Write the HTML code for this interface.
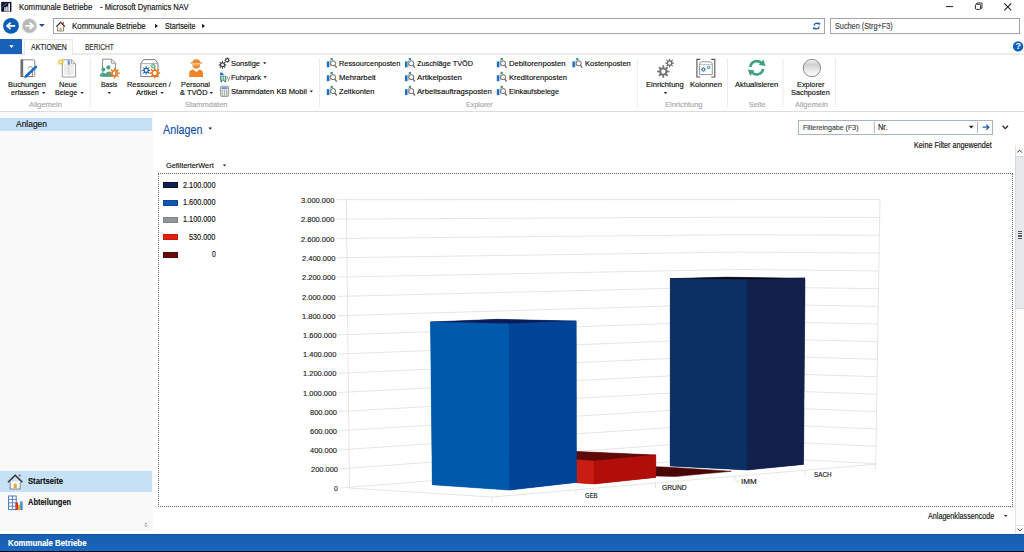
<!DOCTYPE html>
<html lang="de"><head><meta charset="utf-8"><title>Kommunale Betriebe - Microsoft Dynamics NAV</title>
<style>
html,body{margin:0;padding:0;background:#fff;}
body{width:1024px;height:552px;overflow:hidden;font-family:"Liberation Sans",Arial,sans-serif;}
#app{position:relative;width:1024px;height:552px;overflow:hidden;background:#fff;}
#app div,#app svg{position:absolute;}
.t{position:absolute;white-space:nowrap;display:inline-block;transform-origin:0 50%;-webkit-text-stroke:0.15px currentColor;}

</style></head><body>
<div id="app">
<!-- nav pane -->
<div style="left:0;top:111px;width:152.7px;height:419.5px;background:#f9f9f9"></div>
<div style="left:0;top:118.3px;width:151.6px;height:12.4px;background:#c6e1f6"></div>
<div style="left:0;top:470.5px;width:151.6px;height:21.2px;background:#c6e1f6"></div>
<!-- status bar -->
<div style="left:0;top:534.2px;width:1024px;height:17.8px;background:linear-gradient(#0a469a 0,#1760b2 1.4px,#1862b6 60%,#1a6ac6 100%)"></div>
<div style="left:0;top:550.8px;width:1024px;height:2px;background:#050505"></div>
<!-- ribbon borders -->
<div style="left:0;top:53px;width:1024px;height:1.8px;background:#ececec"></div>
<div style="left:0;top:110.5px;width:1024px;height:1px;background:#dcdcdc"></div>
<!-- blue app tab -->
<div style="left:0;top:38.8px;width:21.8px;height:15px;background:#1862ba"></div>
<!-- active tab -->
<div style="left:23.8px;top:39.4px;width:49.6px;height:15.6px;background:#fff;border:1px solid #e8e8e8;border-bottom:none;box-sizing:border-box"></div>
<!-- address + search -->
<div style="left:53px;top:18px;width:772px;height:16px;border:1px solid #a4a4a4;box-sizing:border-box;background:#fff"></div>
<div style="left:830px;top:18px;width:189.5px;height:16px;border:1px solid #a4a4a4;box-sizing:border-box;background:#fff"></div>
<!-- filter box -->
<div style="left:798px;top:119.5px;width:195px;height:15.5px;border:1px solid #a8b4c0;box-sizing:border-box;background:#fff"></div>
<!-- chart frame -->
<div style="left:158px;top:173px;width:855px;height:334px;border:1px dotted #666;box-sizing:border-box"></div>
<!-- scrollbar -->
<div style="left:1014.5px;top:144.5px;width:9.5px;height:389.5px;background:#fcfcfc;border-left:1px solid #e2e2e2;box-sizing:border-box"></div>
<div style="left:1015px;top:156px;width:9px;height:153px;background:#e6e9ec;border:1px solid #d6d9dc;border-right:none;box-sizing:border-box"></div>
<div style="left:1018px;top:230.6px;width:4px;height:1.2px;background:#555"></div>
<div style="left:1018px;top:233px;width:4px;height:1.2px;background:#555"></div>
<div style="left:1018px;top:235.4px;width:4px;height:1.2px;background:#555"></div>
<div style="left:1018px;top:237.8px;width:4px;height:1.2px;background:#555"></div>
<div style="left:1014.5px;top:524.5px;width:9.5px;height:1px;background:#e6e6e6"></div>
<!-- chart -->
<svg style="left:0;top:0" width="1024" height="552" viewBox="0 0 1024 552">
<g fill="none" stroke="#e2e2e2" stroke-width="0.9">
<polyline points="336.4,199.7 738,199.6 880.0,199.5"/>
<polyline points="336.6,219.1 738,217.2 879.7,217.4"/>
<polyline points="336.9,238.5 738,234.7 879.4,235.3"/>
<polyline points="337.1,257.8 738,252.1 879.2,253.1"/>
<polyline points="337.3,277.1 738,269.5 878.9,270.9"/>
<polyline points="337.6,296.4 738,286.8 878.6,288.7"/>
<polyline points="337.8,315.7 738,304.0 878.3,306.4"/>
<polyline points="338.0,334.9 738,321.2 878.0,324.0"/>
<polyline points="338.3,354.1 738,338.4 877.8,341.6"/>
<polyline points="338.5,373.3 738,355.4 877.5,359.2"/>
<polyline points="338.7,392.5 738,372.4 877.2,376.7"/>
<polyline points="339.0,411.6 738,389.3 876.9,394.2"/>
<polyline points="339.2,430.8 738,406.2 876.6,411.6"/>
<polyline points="339.4,449.9 738,423.0 876.4,429.0"/>
<polyline points="339.7,468.9 738,439.7 876.1,446.3"/>
<polyline points="339.9,488.0 738,456.4 875.8,463.6"/>
<line x1="346.3" y1="199.6" x2="349.5" y2="488.3"/>
<polyline points="349.5,488 492,497 875.6,464.2"/>
<line x1="492" y1="497" x2="492" y2="503"/>
<line x1="576" y1="490" x2="576" y2="495"/>
<line x1="655.5" y1="482" x2="655.5" y2="488"/>
<line x1="735" y1="476" x2="735" y2="481"/>
<line x1="805" y1="470" x2="805" y2="475"/>
<line x1="880" y1="199.5" x2="875.6" y2="470"/>
</g>
<!-- dark red flat bar -->
<polygon points="656,466.7 670,467.2 731.3,471.3 675,476.6 656,476" fill="#4a0606" stroke="#4a0606" stroke-width="0.5" stroke-linejoin="round"/>
<!-- red bar -->
<polygon points="576,451.4 655.8,455 655.8,477.4 594,484 576,482.7" fill="#b10e09"/>
<polygon points="576,451.4 655.8,455 594,461 576,459.7" fill="#5e0a08" stroke="#5e0a08" stroke-width="0.5" stroke-linejoin="round"/>
<polygon points="576,459.7 594,461 594,484 576,482.7" fill="#c91d11" stroke="#c91d11" stroke-width="0.5" stroke-linejoin="round"/>
<polygon points="594,461 655.8,455 655.8,477.4 594,484" fill="#b10e09" stroke="#b10e09" stroke-width="0.5" stroke-linejoin="round"/>
<!-- blue bar -->
<polygon points="430.5,322 497,319.3 576.2,321.1 576.4,482.4 509.6,490.1 432.3,484.8" fill="#004498"/>
<polygon points="430.5,322 497,319.3 576.2,321.1 509,323.8" fill="#0b1b5a" stroke="#0b1b5a" stroke-width="0.5" stroke-linejoin="round"/>
<polygon points="430.5,322 509,323.8 509.6,490.1 432.3,484.8" fill="#0059aa" stroke="#0059aa" stroke-width="0.5" stroke-linejoin="round"/>
<polygon points="509,323.8 576.2,321.1 576.4,482.4 509.6,490.1" fill="#004498" stroke="#004498" stroke-width="0.5" stroke-linejoin="round"/>
<!-- navy bar -->
<polygon points="670.3,278.6 726,277.2 805,278.2 803.5,464.4 747.5,470 670.2,466" fill="#13204b"/>
<polygon points="670.3,278.6 726,277.2 805,278.2 747.4,279.6" fill="#05060f" stroke="#05060f" stroke-width="0.5" stroke-linejoin="round"/>
<polygon points="670.3,278.6 747.4,279.6 747.5,470 670.2,466" fill="#0a2f62" stroke="#0a2f62" stroke-width="0.5" stroke-linejoin="round"/>
<polygon points="747.4,279.6 805,278.2 803.5,464.4 747.5,470" fill="#13204b" stroke="#13204b" stroke-width="0.5" stroke-linejoin="round"/>
</svg>
<!-- legend swatches -->
<div style="left:163px;top:182.1px;width:14.6px;height:6.2px;background:#13204f;box-sizing:border-box;border:0.6px solid #0a1234"></div>
<div style="left:163px;top:199.5px;width:14.6px;height:6.2px;background:#1155b0;box-sizing:border-box;border:0.6px solid #0d4a9c"></div>
<div style="left:163px;top:216.9px;width:14.6px;height:6.2px;background:#909599;box-sizing:border-box;border:0.6px solid #7f8488"></div>
<div style="left:163px;top:234.3px;width:14.6px;height:6.2px;background:#e02010;box-sizing:border-box;border:0.6px solid #c81c0e"></div>
<div style="left:163px;top:251.7px;width:14.6px;height:6.2px;background:#6b0a0a;box-sizing:border-box;border:0.6px solid #560606"></div>
<!-- icons -->
<svg style="left:0;top:0" width="1024" height="552" viewBox="0 0 1024 552">
<defs>
<path id="gear" fill-rule="evenodd" d="M0.661 -0.159L1.042 -0.132L1.042 0.132L0.661 0.159L0.580 0.355L0.830 0.644L0.644 0.830L0.355 0.580L0.159 0.661L0.132 1.042L-0.132 1.042L-0.159 0.661L-0.355 0.580L-0.644 0.830L-0.830 0.644L-0.580 0.355L-0.661 0.159L-1.042 0.132L-1.042 -0.132L-0.661 -0.159L-0.580 -0.355L-0.830 -0.644L-0.644 -0.830L-0.355 -0.580L-0.159 -0.661L-0.132 -1.042L0.132 -1.042L0.159 -0.661L0.355 -0.580L0.644 -0.830L0.830 -0.644L0.580 -0.355ZM0.370 0A0.370 0.370 0 1 0 -0.370 0A0.370 0.370 0 1 0 0.370 0Z"/>
<g id="exp"><rect x="-0.2" y="3.4" width="2.5" height="5.9" fill="#1b6fc4"/><rect x="2.6" y="2.2" width="1.4" height="6.4" fill="#8a8a8a" opacity=".55"/><rect x="3.6" y="0" width="2.2" height="2.2" fill="#3a9a78"/><circle cx="6.1" cy="5.3" r="2.5" fill="#fff" stroke="#666" stroke-width="1"/><line x1="7.9" y1="7.3" x2="9.7" y2="9.7" stroke="#666" stroke-width="1.3"/></g>
<linearGradient id="ball" x1="0" y1="0" x2="0" y2="1"><stop offset="0" stop-color="#f4f4f4"/><stop offset="0.3" stop-color="#cfcfcf"/><stop offset="0.75" stop-color="#f2f2f2"/><stop offset="1" stop-color="#ffffff"/></linearGradient>
</defs>
<!-- app icon -->
<rect x="1.2" y="1.9" width="10.2" height="9.8" fill="#0b1030"/>
<rect x="4.3" y="7.2" width="1.3" height="4.2" fill="#fff"/><rect x="6.2" y="6.5" width="1.4" height="4.9" fill="#fff"/><rect x="8.3" y="3.4" width="1.7" height="8" fill="#fff"/>
<line x1="2.5" y1="6.6" x2="7.4" y2="3" stroke="#6d7ba8" stroke-width="0.8"/>
<!-- back / forward -->
<circle cx="11" cy="25.9" r="7.9" fill="#0b5cb8"/>
<path d="M15.2 25.9H7.6M10.6 22.7L7.2 25.9L10.6 29.1" fill="none" stroke="#fff" stroke-width="1.9"/>
<circle cx="29.4" cy="25.9" r="7.1" fill="#b9b9b9" stroke="#d2d2d2" stroke-width="1"/>
<path d="M25.2 25.9H32.8M29.8 22.7L33.2 25.9L29.8 29.1" fill="none" stroke="#fff" stroke-width="1.9"/>
<polygon points="39.1,24 44.7,24 41.9,27.1" fill="#0b4aa0"/>
<!-- house in address bar -->
<path d="M56.3 26.6L60.6 22.3L64.9 26.6" fill="none" stroke="#333" stroke-width="1.3"/>
<rect x="62.6" y="22.2" width="1.3" height="2.4" fill="#c33"/>
<path d="M57.6 26.2V31H63.6V26.2" fill="none" stroke="#777" stroke-width="0.9"/>
<rect x="59.7" y="27.6" width="1.9" height="3" fill="#e8b040"/>
<!-- breadcrumb arrows -->
<polygon points="155,23.8 158,26 155,28.2" fill="#222"/>
<polygon points="202,23.8 205,26 202,28.2" fill="#222"/>
<!-- refresh in address bar -->
<path d="M814 25.6A2.7 2.7 0 0 1 818.6 24.1M819.2 26.6A2.7 2.7 0 0 1 814.6 28" fill="none" stroke="#1b5eb0" stroke-width="1.3"/>
<polygon points="817.6,22.6 820.4,23 819.4,25.6" fill="#1b5eb0"/><polygon points="815.6,29.5 812.8,29.1 813.8,26.5" fill="#1b5eb0"/>
<!-- window buttons -->
<line x1="946" y1="6.6" x2="953.2" y2="6.6" stroke="#222" stroke-width="1"/>
<rect x="975.4" y="4.2" width="5.2" height="5.2" rx="1.2" fill="none" stroke="#222" stroke-width="1"/>
<path d="M976.8 4V3H982V8.2H980.8" fill="none" stroke="#222" stroke-width="0.9"/>
<path d="M1004.3 3.3L1011.3 10.3M1011.3 3.3L1004.3 10.3" fill="none" stroke="#222" stroke-width="1.1"/>
<!-- app tab arrow -->
<polygon points="9.2,45.3 13.8,45.3 11.5,47.9" fill="#fff"/>
<!-- help -->
<circle cx="1018.1" cy="46.4" r="5.2" fill="#0f5fbc"/>
<!-- ribbon separators -->
<g stroke="#ececec" stroke-width="1"><line x1="90.3" y1="58" x2="90.3" y2="107"/><line x1="319.5" y1="58" x2="319.5" y2="107"/><line x1="637.4" y1="58" x2="637.4" y2="107"/><line x1="727.5" y1="58" x2="727.5" y2="107"/><line x1="783" y1="58" x2="783" y2="107"/><line x1="835.6" y1="58" x2="835.6" y2="107"/></g>
<!-- dropdown arrows (ribbon) -->
<g fill="#222">
<polygon points="42,92 45.4,92 43.7,94"/>
<polygon points="80.4,92 83.8,92 82.1,94"/>
<polygon points="107.6,92 111,92 109.3,94"/>
<polygon points="160.4,92 163.8,92 162.1,94"/>
<polygon points="209.6,92 213,92 211.3,94"/>
<polygon points="663.8,92 667.2,92 665.5,94"/>
<polygon points="263,62.2 266.4,62.2 264.7,64.2"/>
<polygon points="263.4,76.3 266.8,76.3 265.1,78.3"/>
<polygon points="309.6,90.4 313,90.4 311.3,92.4"/>
<polygon points="208.4,127.6 212,127.6 210.2,129.8"/>
<polygon points="222.8,164.5 226.2,164.5 224.5,166.5"/>
<polygon points="1004,515 1007.4,515 1005.7,517"/>
<polygon points="968.8,125.8 973.6,125.8 971.2,128.6"/>
</g>
<!-- Buchungen erfassen -->
<rect x="21.2" y="59.8" width="13.6" height="16.8" rx="1" fill="#fff" stroke="#8c8c8c" stroke-width="1"/>
<rect x="20.6" y="59.4" width="2.6" height="17.6" fill="#6e6e6e"/>
<path d="M28.6 68.5C28.6 65.8 32.4 65.8 32.4 68.5V76.4H28.6" fill="none" stroke="#777" stroke-width="0.9"/>
<path d="M35.9 66.9L26.3 76" stroke="#1a68c0" stroke-width="2.6" stroke-linecap="round"/>
<polygon points="24.5,78 25.1,75.3 27.2,77.2" fill="#1a68c0"/>
<!-- Neue Belege -->
<path d="M62.3 59.8H71.4L75.6 63.8V77H62.3Z" fill="#fff" stroke="#9a9a9a" stroke-width="1"/>
<path d="M71.4 59.8V63.8H75.6" fill="none" stroke="#9a9a9a" stroke-width="0.9"/>
<rect x="64" y="64" width="9.8" height="10.8" fill="#ececec"/>
<line x1="68.9" y1="60.8" x2="68.9" y2="75.5" stroke="#b9b9b9" stroke-width="0.8" stroke-dasharray="1.4 1"/>
<rect x="67.6" y="60.4" width="2.2" height="4.2" fill="#5b93dc"/>
<g fill="#f0c030"><use href="#gear" transform="translate(60.9 62) scale(3.2)"/></g>
<!-- Basis -->
<path d="M102.6 59.2H111.4L115.6 63.2V76.2H102.6Z" fill="#fff" stroke="#8c8c8c" stroke-width="1"/>
<path d="M111.4 59.2V63.2H115.6" fill="none" stroke="#8c8c8c" stroke-width="0.9"/>
<g fill="#4aa282"><circle cx="103.4" cy="69.4" r="2"/><circle cx="108.4" cy="67.4" r="2.1"/><path d="M99.6 76.6C99.6 71.6 107 71.6 107 76.6Z"/><path d="M105.2 76.6C105.2 70 112 70 112 74.8V76.6Z"/></g>
<g fill="#f07a22"><use href="#gear" transform="translate(114.7 73.2) scale(5)"/></g>
<!-- Ressourcen / Artikel -->
<path d="M140.8 76.6V63.6L143.6 59.6H155.2L158 63.6V76.6Z" fill="#fff" stroke="#7a7a7a" stroke-width="1"/>
<line x1="140.8" y1="63.6" x2="158" y2="63.6" stroke="#9a9a9a" stroke-width="0.8"/>
<g fill="#1665c0"><use href="#gear" transform="translate(146.2 70.4) scale(3.9)"/></g>
<g fill="#3c9c7a"><use href="#gear" transform="translate(153.2 66.2) scale(2.5)"/></g>
<g fill="#f07a22"><use href="#gear" transform="translate(154.8 73) scale(5.1)"/></g>
<!-- Personal -->
<g fill="#f0852a"><path d="M192.3 62.8C192.3 58.2 200.3 58.2 200.3 62.8Z"/><rect x="190.5" y="62.3" width="11.6" height="1.3" rx="0.6"/><path d="M192.5 64.2H200.1V65.2C200.1 69.8 192.5 69.8 192.5 65.2Z"/><path d="M189.2 76.9V73.2C189.2 70.6 191.4 69.8 193.4 69.5L196.3 72L199.2 69.5C201.2 69.8 203 70.6 203 73.2V76.9Z"/></g>
<rect x="193.2" y="64.6" width="6.2" height="0.9" fill="#f9c08c"/>
<!-- Sonstige -->
<g fill="#3c3c3c"><use href="#gear" transform="translate(222.5 64.9) scale(3.7)"/><use href="#gear" transform="translate(227.2 60.2) scale(2.8)"/></g>
<!-- Fuhrpark -->
<rect x="220" y="72.6" width="2.6" height="2.6" fill="#2a6fc8"/><rect x="222" y="73.6" width="1.6" height="1.6" fill="#2a6fc8"/>
<rect x="220" y="75.8" width="6.4" height="5" fill="#4aa282"/><rect x="221.6" y="76.8" width="1" height="3" fill="#fff"/><rect x="223.8" y="76.8" width="1" height="3" fill="#fff"/>
<rect x="220.6" y="80.8" width="1.5" height="1.4" fill="#555"/><rect x="224.4" y="80.8" width="1.5" height="1.4" fill="#555"/>
<path d="M227 76.4L228.4 79.6M230 76.4L228 81.6" stroke="#8a8a8a" stroke-width="0.9" fill="none"/>
<!-- Stammdaten KB Mobil (calculator) -->
<rect x="220.4" y="86.2" width="8.2" height="10.2" rx="1" fill="#f4f4f4" stroke="#8a8a8a" stroke-width="0.9"/>
<rect x="221.4" y="87.2" width="6.2" height="2" fill="#5f96d8"/>
<g fill="#8a8a8a"><rect x="221.6" y="90.4" width="1.4" height="1.2"/><rect x="223.8" y="90.4" width="1.4" height="1.2"/><rect x="226" y="90.4" width="1.4" height="1.2"/><rect x="221.6" y="92.4" width="1.4" height="1.2"/><rect x="223.8" y="92.4" width="1.4" height="1.2"/><rect x="226" y="92.4" width="1.4" height="1.2"/><rect x="221.6" y="94.4" width="1.4" height="1.2"/><rect x="223.8" y="94.4" width="1.4" height="1.2"/><rect x="226" y="94.4" width="1.4" height="1.2"/></g>
<!-- explorer item icons -->
<use href="#exp" x="327" y="58"/><use href="#exp" x="327" y="71.9"/><use href="#exp" x="327" y="85.8"/>
<use href="#exp" x="405.2" y="58"/><use href="#exp" x="405.2" y="71.9"/><use href="#exp" x="405.2" y="85.8"/>
<use href="#exp" x="497" y="58"/><use href="#exp" x="497" y="71.9"/><use href="#exp" x="497" y="85.8"/>
<use href="#exp" x="572.6" y="58"/>
<!-- Einrichtung -->
<g fill="#707070"><use href="#gear" transform="translate(663.3 71.5) scale(5.9)"/><use href="#gear" transform="translate(669.6 63.1) scale(4.2)"/></g>
<!-- Kolonnen -->
<path d="M700.2 59.4H696.9V77H700.2M711.2 59.4H714.8V77H711.2" fill="none" stroke="#555" stroke-width="1.1"/>
<path d="M699.6 74.6V64.2C699.6 62.6 700.6 61.8 702 61.8H710C711.4 61.8 712.3 62.6 712.3 64.2V74.6Z" fill="#fff" stroke="#8a8a8a" stroke-width="0.9"/>
<line x1="699.6" y1="64.4" x2="712.3" y2="64.4" stroke="#a5a5a5" stroke-width="0.7"/>
<g fill="#2a72c8"><use href="#gear" transform="translate(703.4 69.5) scale(2.4)"/></g><g fill="#3c9c8a"><use href="#gear" transform="translate(708.7 67.3) scale(2)"/></g>
<!-- Aktualisieren -->
<g fill="none" stroke="#3ea27e" stroke-width="2.6"><path d="M750.4 66.8A6.3 6.3 0 0 1 761.9 64"/><path d="M763 68.8A6.3 6.3 0 0 1 751.5 71.6"/></g>
<polygon points="763.3,59.6 765.6,66 758.8,65" fill="#3ea27e"/><polygon points="750.1,76.1 747.9,69.6 754.6,70.6" fill="#3ea27e"/>
<!-- Explorer Sachposten -->
<circle cx="811.9" cy="68" r="8.7" fill="url(#ball)" stroke="#8e8e8e" stroke-width="1"/>
<!-- filter box parts -->
<line x1="874.3" y1="121.5" x2="874.3" y2="133" stroke="#b4b4b4" stroke-width="1"/>
<line x1="977.5" y1="121.5" x2="977.5" y2="133" stroke="#b4b4b4" stroke-width="1"/>
<path d="M982.6 127.2H988.6M986.2 124.6L988.9 127.2L986.2 129.8" fill="none" stroke="#1b5eb0" stroke-width="1.2"/>
<path d="M1002.6 125.8L1005.3 128.6L1008 125.8" fill="none" stroke="#222" stroke-width="1.3"/>
<!-- scrollbar arrows -->
<path d="M1017.2 152.6L1019.6 150.2L1022 152.6" fill="none" stroke="#333" stroke-width="1"/>
<path d="M1017.4 528.6L1019.8 531L1022.2 528.6" fill="none" stroke="#333" stroke-width="1"/>
<!-- nav pane icons -->
<path d="M8 482.2L15.2 475.2L22.4 482.2" fill="none" stroke="#333" stroke-width="1.5"/>
<path d="M10.2 481.4V489H20.2V481.4" fill="#fff" stroke="#777" stroke-width="0.9"/>
<rect x="13.7" y="483.6" width="3" height="4.6" fill="#e8a838"/>
<circle cx="19.6" cy="475.6" r="1" fill="#c33"/>
<rect x="8.6" y="496" width="7.6" height="13.6" fill="#fff" stroke="#3b6fb8" stroke-width="0.9"/>
<g stroke="#3b6fb8" stroke-width="0.8"><line x1="8.6" y1="499.4" x2="16.2" y2="499.4"/><line x1="8.6" y1="502.8" x2="16.2" y2="502.8"/><line x1="8.6" y1="506.2" x2="16.2" y2="506.2"/><line x1="12.4" y1="496" x2="12.4" y2="509.6"/></g>
<rect x="15.4" y="502.4" width="2.6" height="7.6" fill="#d8392c"/><rect x="18" y="504.8" width="2.2" height="5.2" fill="#e8a838"/><rect x="20.2" y="501.4" width="2.4" height="8.6" fill="#3b8fb8"/>
<!-- small chevrons bottom of nav pane -->
<path d="M144.8 523L146 524.2L147.2 523M144.8 525.4L146 526.6L147.2 525.4" fill="none" stroke="#555" stroke-width="0.7"/>
</svg>
<span style="position:absolute;left:1015.4px;top:41.3px;font:700 9px/10px 'Liberation Sans',Arial,sans-serif;color:#fff;width:5.4px;text-align:center">?</span>

<span class="t" style="left:18.75px;top:1px;font-size:8.5px;line-height:12px;height:12px;color:#111;transform:scaleX(0.9227);">Kommunale Betriebe</span>
<span class="t" style="left:99.5px;top:1px;font-size:8.5px;line-height:12px;height:12px;color:#111;transform:scaleX(0.8979);">- Microsoft Dynamics NAV</span>
<span class="t" style="left:72px;top:20px;font-size:8.5px;line-height:12px;height:12px;color:#111;transform:scaleX(0.9290);">Kommunale Betriebe</span>
<span class="t" style="left:165px;top:20px;font-size:8.5px;line-height:12px;height:12px;color:#111;transform:scaleX(0.8494);">Startseite</span>
<span class="t" style="left:834.5px;top:21px;font-size:8.2px;line-height:12px;height:12px;color:#444;transform:scaleX(0.8904);">Suchen (Strg+F3)</span>
<span class="t" style="left:31.25px;top:42px;font-size:8.2px;line-height:12px;height:12px;color:#222;transform:scaleX(0.8541);">AKTIONEN</span>
<span class="t" style="left:85px;top:42px;font-size:8.2px;line-height:12px;height:12px;color:#333;transform:scaleX(0.8000);">BERICHT</span>
<span class="t" style="left:8.4px;top:79px;font-size:8.1px;line-height:12px;height:12px;color:#0c0c0c;transform:scaleX(0.9227);">Buchungen</span>
<span class="t" style="left:11.3px;top:87px;font-size:8.1px;line-height:12px;height:12px;color:#0c0c0c;transform:scaleX(0.8922);">erfassen</span>
<span class="t" style="left:58.8px;top:79px;font-size:8.1px;line-height:12px;height:12px;color:#0c0c0c;transform:scaleX(0.9246);">Neue</span>
<span class="t" style="left:55.1px;top:87px;font-size:8.1px;line-height:12px;height:12px;color:#0c0c0c;transform:scaleX(0.8769);">Belege</span>
<span class="t" style="left:101.2px;top:79px;font-size:8.1px;line-height:12px;height:12px;color:#0c0c0c;transform:scaleX(0.8234);">Basis</span>
<span class="t" style="left:127px;top:79px;font-size:8.1px;line-height:12px;height:12px;color:#0c0c0c;transform:scaleX(0.9185);">Ressourcen /</span>
<span class="t" style="left:136.2px;top:87px;font-size:8.1px;line-height:12px;height:12px;color:#0c0c0c;transform:scaleX(0.9467);">Artikel</span>
<span class="t" style="left:180.5px;top:79px;font-size:8.1px;line-height:12px;height:12px;color:#0c0c0c;transform:scaleX(0.9076);">Personal</span>
<span class="t" style="left:179.5px;top:87px;font-size:8.1px;line-height:12px;height:12px;color:#0c0c0c;transform:scaleX(0.9171);">&amp; TVÖD</span>
<span class="t" style="left:646.25px;top:79px;font-size:8.1px;line-height:12px;height:12px;color:#0c0c0c;transform:scaleX(0.9321);">Einrichtung</span>
<span class="t" style="left:690px;top:79px;font-size:8.1px;line-height:12px;height:12px;color:#0c0c0c;transform:scaleX(0.9352);">Kolonnen</span>
<span class="t" style="left:735px;top:79px;font-size:8.1px;line-height:12px;height:12px;color:#0c0c0c;transform:scaleX(0.9332);">Aktualisieren</span>
<span class="t" style="left:797px;top:79px;font-size:8.1px;line-height:12px;height:12px;color:#0c0c0c;transform:scaleX(0.9124);">Explorer</span>
<span class="t" style="left:791.25px;top:87px;font-size:8.1px;line-height:12px;height:12px;color:#0c0c0c;transform:scaleX(0.9064);">Sachposten</span>
<span class="t" style="left:29.2px;top:99px;font-size:8px;line-height:12px;height:12px;color:#a8a8a8;transform:scaleX(0.9334);">Allgemein</span>
<span class="t" style="left:184.5px;top:99px;font-size:8px;line-height:12px;height:12px;color:#a8a8a8;transform:scaleX(0.9370);">Stammdaten</span>
<span class="t" style="left:466.25px;top:99px;font-size:8px;line-height:12px;height:12px;color:#a8a8a8;transform:scaleX(0.8977);">Explorer</span>
<span class="t" style="left:665px;top:99px;font-size:8px;line-height:12px;height:12px;color:#a8a8a8;transform:scaleX(0.9368);">Einrichtung</span>
<span class="t" style="left:748.5px;top:99px;font-size:8px;line-height:12px;height:12px;color:#a8a8a8;transform:scaleX(0.9049);">Seite</span>
<span class="t" style="left:795px;top:99px;font-size:8px;line-height:12px;height:12px;color:#a8a8a8;transform:scaleX(0.9391);">Allgemein</span>
<span class="t" style="left:231px;top:58px;font-size:8.1px;line-height:12px;height:12px;color:#0c0c0c;transform:scaleX(0.9206);">Sonstige</span>
<span class="t" style="left:231px;top:72px;font-size:8.1px;line-height:12px;height:12px;color:#0c0c0c;transform:scaleX(0.9262);">Fuhrpark</span>
<span class="t" style="left:231px;top:86px;font-size:8.1px;line-height:12px;height:12px;color:#0c0c0c;transform:scaleX(0.9437);">Stammdaten KB Mobil</span>
<span class="t" style="left:339px;top:58px;font-size:8.1px;line-height:12px;height:12px;color:#0c0c0c;transform:scaleX(0.9081);">Ressourcenposten</span>
<span class="t" style="left:339px;top:72px;font-size:8.1px;line-height:12px;height:12px;color:#0c0c0c;transform:scaleX(0.9499);">Mehrarbeit</span>
<span class="t" style="left:339px;top:86px;font-size:8.1px;line-height:12px;height:12px;color:#0c0c0c;transform:scaleX(0.9392);">Zeitkonten</span>
<span class="t" style="left:417px;top:58px;font-size:8.1px;line-height:12px;height:12px;color:#0c0c0c;transform:scaleX(0.9041);">Zuschläge TVÖD</span>
<span class="t" style="left:417px;top:72px;font-size:8.1px;line-height:12px;height:12px;color:#0c0c0c;transform:scaleX(0.9563);">Artikelposten</span>
<span class="t" style="left:417px;top:86px;font-size:8.1px;line-height:12px;height:12px;color:#0c0c0c;transform:scaleX(0.9492);">Arbeitsauftragsposten</span>
<span class="t" style="left:509px;top:58px;font-size:8.1px;line-height:12px;height:12px;color:#0c0c0c;transform:scaleX(0.9511);">Debitorenposten</span>
<span class="t" style="left:509px;top:72px;font-size:8.1px;line-height:12px;height:12px;color:#0c0c0c;transform:scaleX(0.9407);">Kreditorenposten</span>
<span class="t" style="left:509px;top:86px;font-size:8.1px;line-height:12px;height:12px;color:#0c0c0c;transform:scaleX(0.9032);">Einkaufsbelege</span>
<span class="t" style="left:584.5px;top:58px;font-size:8.1px;line-height:12px;height:12px;color:#0c0c0c;transform:scaleX(0.9242);">Kostenposten</span>
<span class="t" style="left:15.9px;top:118px;font-size:8.6px;line-height:12px;height:12px;color:#111;transform:scaleX(0.9827);">Anlagen</span>
<span class="t" style="left:27.5px;top:476px;font-size:8.2px;line-height:12px;height:12px;color:#111;font-weight:700;transform:scaleX(0.9376);">Startseite</span>
<span class="t" style="left:27.6px;top:497px;font-size:8.2px;line-height:12px;height:12px;color:#111;font-weight:700;transform:scaleX(0.9110);">Abteilungen</span>
<span class="t" style="left:8.4px;top:537px;font-size:8.5px;line-height:12px;height:12px;color:#fff;font-weight:700;transform:scaleX(0.9232);">Kommunale Betriebe</span>
<span class="t" style="left:163.3px;top:121px;font-size:12.7px;line-height:18px;height:18px;color:#0f4f9f;transform:scaleX(0.8462);">Anlagen</span>
<span class="t" style="left:802.5px;top:122px;font-size:7.8px;line-height:12px;height:12px;color:#444;transform:scaleX(0.9018);">Filtereingabe (F3)</span>
<span class="t" style="left:878px;top:122px;font-size:8.2px;line-height:12px;height:12px;color:#222;transform:scaleX(0.9075);">Nr.</span>
<span class="t" style="left:914px;top:140px;font-size:8.2px;line-height:12px;height:12px;color:#111;transform:scaleX(0.8804);">Keine Filter angewendet</span>
<span class="t" style="left:166px;top:160px;font-size:8px;line-height:12px;height:12px;color:#111;transform:scaleX(0.9195);">GefilterterWert</span>
<span class="t" style="left:928px;top:511px;font-size:8.2px;line-height:12px;height:12px;color:#111;transform:scaleX(0.8774);">Anlagenklassencode</span>
<span class="t" style="left:182.8px;top:180px;font-size:8.2px;line-height:12px;height:12px;color:#111;transform:scaleX(0.8919);">2.100.000</span>
<span class="t" style="left:182.8px;top:197px;font-size:8.2px;line-height:12px;height:12px;color:#111;transform:scaleX(0.8919);">1.600.000</span>
<span class="t" style="left:182.8px;top:214px;font-size:8.2px;line-height:12px;height:12px;color:#111;transform:scaleX(0.8919);">1.100.000</span>
<span class="t" style="left:188.9px;top:232px;font-size:8.2px;line-height:12px;height:12px;color:#111;transform:scaleX(0.8916);">530.000</span>
<span class="t" style="left:211.5px;top:249px;font-size:8.2px;line-height:12px;height:12px;color:#111;transform:scaleX(0.8329);">0</span>
<span class="t" style="left:301.0px;top:195px;font-size:8px;line-height:12px;height:12px;color:#222;transform:scaleX(0.9384);">3.000.000</span>
<span class="t" style="left:301.23px;top:214px;font-size:8px;line-height:12px;height:12px;color:#222;transform:scaleX(0.9384);">2.800.000</span>
<span class="t" style="left:301.47px;top:234px;font-size:8px;line-height:12px;height:12px;color:#222;transform:scaleX(0.9384);">2.600.000</span>
<span class="t" style="left:301.7px;top:253px;font-size:8px;line-height:12px;height:12px;color:#222;transform:scaleX(0.9384);">2.400.000</span>
<span class="t" style="left:301.93px;top:272px;font-size:8px;line-height:12px;height:12px;color:#222;transform:scaleX(0.9384);">2.200.000</span>
<span class="t" style="left:302.17px;top:292px;font-size:8px;line-height:12px;height:12px;color:#222;transform:scaleX(0.9384);">2.000.000</span>
<span class="t" style="left:302.4px;top:311px;font-size:8px;line-height:12px;height:12px;color:#222;transform:scaleX(0.9384);">1.800.000</span>
<span class="t" style="left:302.63px;top:330px;font-size:8px;line-height:12px;height:12px;color:#222;transform:scaleX(0.9384);">1.600.000</span>
<span class="t" style="left:302.87px;top:349px;font-size:8px;line-height:12px;height:12px;color:#222;transform:scaleX(0.9384);">1.400.000</span>
<span class="t" style="left:303.1px;top:368px;font-size:8px;line-height:12px;height:12px;color:#222;transform:scaleX(0.9384);">1.200.000</span>
<span class="t" style="left:303.33px;top:388px;font-size:8px;line-height:12px;height:12px;color:#222;transform:scaleX(0.9384);">1.000.000</span>
<span class="t" style="left:309.97px;top:407px;font-size:8px;line-height:12px;height:12px;color:#222;transform:scaleX(0.9335);">800.000</span>
<span class="t" style="left:310.2px;top:426px;font-size:8px;line-height:12px;height:12px;color:#222;transform:scaleX(0.9335);">600.000</span>
<span class="t" style="left:310.43px;top:445px;font-size:8px;line-height:12px;height:12px;color:#222;transform:scaleX(0.9335);">400.000</span>
<span class="t" style="left:310.67px;top:464px;font-size:8px;line-height:12px;height:12px;color:#222;transform:scaleX(0.9335);">200.000</span>
<span class="t" style="left:334.1px;top:483px;font-size:8px;line-height:12px;height:12px;color:#222;transform:scaleX(0.8533);">0</span>
<span class="t" style="left:585px;top:490px;font-size:7.6px;line-height:12px;height:12px;color:#111;transform:scaleX(0.7852);">GEB</span>
<span class="t" style="left:661.7px;top:482px;font-size:7.6px;line-height:12px;height:12px;color:#111;transform:scaleX(0.8835);">GRUND</span>
<span class="t" style="left:741.25px;top:476px;font-size:7.6px;line-height:12px;height:12px;color:#111;transform:scaleX(1.0565);">IMM</span>
<span class="t" style="left:813.75px;top:469px;font-size:7.6px;line-height:12px;height:12px;color:#111;transform:scaleX(0.8290);">SACH</span>
</div>
</body></html>
